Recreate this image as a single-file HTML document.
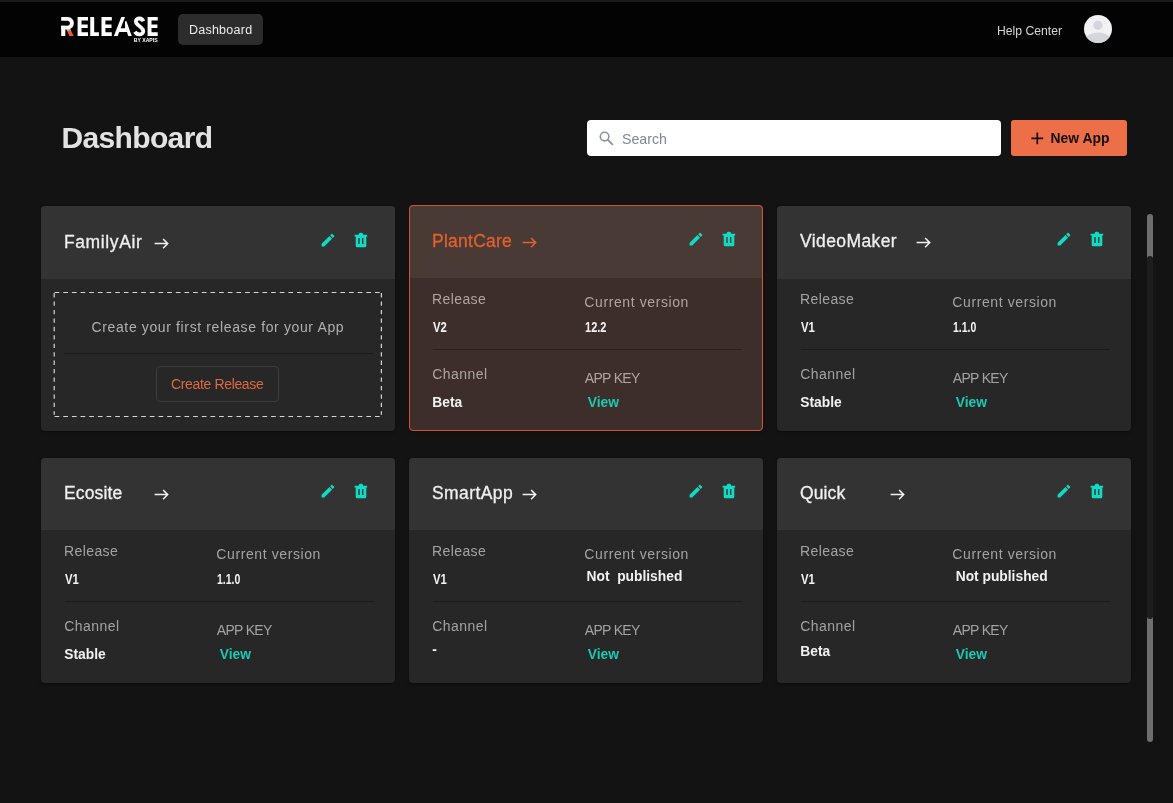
<!DOCTYPE html>
<html>
<head>
<meta charset="utf-8">
<title>Release Dashboard</title>
<style>
*{box-sizing:border-box;margin:0;padding:0}
html,body{width:1173px;height:803px;overflow:hidden;background:#131313;font-family:"Liberation Sans",sans-serif;}
body{position:relative}
#root{position:absolute;left:0;top:0;width:1173px;height:803px;will-change:transform}
.abs{position:absolute}
.t{position:absolute;white-space:nowrap;line-height:20px}
.topline{left:0;top:0;width:1173px;height:2px;background:#1b1b1b}
.nav{left:0;top:2px;width:1173px;height:55px;background:#030303}
.navbtn{left:178px;top:14px;width:85px;height:31px;background:#2c2c2c;border-radius:5px;color:#ececec;font-size:12.5px;line-height:31px;text-align:center;letter-spacing:0.25px;padding-top:1px;padding-left:0.3px}
.help{left:997px;top:22.5px;color:#d6d6d6;font-size:12.2px;line-height:16px;white-space:nowrap}
.avatar{left:1083.7px;top:15.3px;width:28px;height:28px}
.logo{left:60px;top:14px}
h1{left:61.5px;top:118px;font-size:30px;line-height:40px;color:#e2e2e2;font-weight:bold;white-space:nowrap;letter-spacing:-0.65px}
.search{left:587px;top:120px;width:414px;height:36px;background:#fff;border-radius:4px}
.search span{position:absolute;left:35px;top:9.5px;font-size:14.2px;line-height:18px;color:#7c8798}
.search svg{position:absolute;left:12px;top:11px}
.newapp{left:1011px;top:120px;width:116px;height:36px;background:#ec6f48;border-radius:3px;color:#150b06;font-size:13.9px;font-weight:bold}
.newapp span{position:absolute;left:39.5px;top:8.5px;line-height:18px;white-space:nowrap}
.newapp svg{position:absolute;left:19.8px;top:11.8px}
.card{width:354px;height:225px;background:#272727;border-radius:4px;box-shadow:0 1px 3px rgba(0,0,0,.45)}
.card .hd{position:absolute;left:0;top:0;width:100%;height:73px;background:#333333;border-radius:4px 4px 0 0}
.card svg{position:absolute}
.ttl{font-size:17.5px;color:#f0f0f0;letter-spacing:0.4px;-webkit-text-stroke:0.3px #f0f0f0}
.lbl{font-size:14px;color:#a3a3a3}
.val{font-size:13.8px;color:#f2f2f2;font-weight:bold}
.view{font-size:13.8px;color:#1cc9b3;font-weight:bold}
.sep{position:absolute;left:23px;width:309px;height:1px;background:#1b1b1b}
.sel{background:#3d2e2b;height:226px}
.sel .hd{background:#4a3a36}
.sel .ttl{color:#e2602f;-webkit-text-stroke-color:#e2602f}
.sel .sep{background:#2c201e}
.sel .lbl{color:#ada5a2}
.selb{position:absolute;left:0;top:0;width:354px;height:226px;border:1px solid #d4552a;border-radius:4px}
.dmsg{font-size:14px;color:#b0b0b0}
.cbtn{position:absolute;border:1px solid #3d3d3d;border-radius:4px}
.cbt{font-size:14px;color:#dc6a42;letter-spacing:-0.35px}
.sb{left:1147px;width:6px;border-radius:3px}
</style>
</head>
<body>
<div id="root">
<div class="abs topline"></div>
<div class="abs nav"></div>
<svg class="abs logo" width="100" height="30" viewBox="60 14 100 30">
<g fill="#fff">
<path d="M61.2 18.8H67.7A4.43 4.43 0 0 1 67.7 27.65H61.2" fill="none" stroke="#fff" stroke-width="3.8"/>
<path d="M61.2 25.75h4.1v10.15h-4.1z"/>
<path d="M66.4 29.3h4.1l0.6 1.5h-4.1z" fill="#e9e9e9"/>
<path d="M67 30.7h4.1l2.6 5.2h-4.4z" fill="#f05a22"/>
<path d="M77.6 16.9h10.4v3.6h-6.5v4h6.2v3.5h-6.2v4.3h6.5v3.6h-10.4z"/>
<path d="M90.25 16.9h3.95v15.4h4.7v3.6h-8.65z"/>
<path d="M101.5 16.9h10.3v3.6h-6.4v4h6.1v3.5h-6.1v4.3h6.4v3.6h-10.3z"/>
<path d="M113.9 35.9L121.3 16.9H125L117.7 35.9z"/>
<path d="M125 21.2h1.5l5.2 14.7h-3.5l-1.2-3.8h-9l1.5-3.9h5.6z"/>
<path d="M143.4 21.2C142.6 19.4 141.3 18.5 139.4 18.5C137.2 18.5 135.8 19.8 135.8 21.5C135.8 23 136.6 23.8 138 24.9L141.2 27.6C142.6 28.8 143.3 29.7 143.3 31.2C143.3 33.1 141.6 34.3 139.3 34.3C137.3 34.3 135.9 33.4 134.9 31.7" fill="none" stroke="#fff" stroke-width="3.8"/>
<path d="M147.6 16.9h10.1v3.6h-6.2v4h5.9v3.5h-5.9v4.3h6.2v3.6h-10.1z"/>
</g>
<text x="133.7" y="41.9" font-family="Liberation Sans, sans-serif" font-weight="bold" font-size="5.4" fill="#fff" textLength="24" lengthAdjust="spacingAndGlyphs">BY XAPIS</text>
</svg>
<div class="abs navbtn">Dashboard</div>
<div class="abs help">Help Center</div>
<svg class="abs avatar" width="28" height="28" viewBox="0 0 28 28"><defs><clipPath id="av"><circle cx="14" cy="14" r="14"/></clipPath></defs><circle cx="14" cy="14" r="14" fill="#f2f2f5"/><g clip-path="url(#av)" fill="#d5d6dd"><circle cx="14" cy="10.3" r="4.6"/><ellipse cx="14" cy="28" rx="14.5" ry="10.5"/></g></svg>
<h1 class="abs">Dashboard</h1>
<div class="abs search"><svg width="15" height="15" viewBox="0 0 15 15"><circle cx="5.6" cy="5.6" r="4.3" fill="none" stroke="#8a94a6" stroke-width="1.6"/><path d="M8.8 8.8L13.4 13.4" stroke="#8a94a6" stroke-width="1.8" stroke-linecap="round"/></svg><span>Search</span></div>
<div class="abs newapp"><svg width="13" height="13" viewBox="0 0 13 13"><path d="M6.3 0.4V12.2M0.4 6.3H12.2" stroke="#150b06" stroke-width="1.7"/></svg><span>New App</span></div>
<div class="abs card" style="left:41px;top:206px"><div class="hd" style="height:73px"></div><div class="t ttl" style="left:23.00px;top:26.34px;letter-spacing:0.6px">FamilyAir</div><svg style="left:113.3px;top:31px" width="16" height="13" viewBox="0 0 16 13"><path d="M0.6 6.6H13.6M9.1 2L13.7 6.6L9.1 11.2" fill="none" stroke="#f0f0f0" stroke-width="1.5"/></svg><svg style="left:280px;top:27px" width="15" height="15" viewBox="0 0 15 15"><g fill="#10dcc4" transform="translate(0.6 0.8) scale(0.7056) translate(-3 -3)"><path d="M3 17.25V21h3.75L17.81 9.94l-3.75-3.75L3 17.25zM20.71 7.04c.39-.39.39-1.02 0-1.41l-2.34-2.34c-.39-.39-1.02-.39-1.41 0l-1.83 1.83 3.75 3.75 1.83-1.83z"/></g></svg><svg style="left:313.1px;top:25.7px" width="14" height="16" viewBox="0 0 14 16"><path fill="#10dcc4" fill-rule="evenodd" d="M4.6 2.7V2.4a1.7 1.7 0 0 1 1.7-1.7h1.2a1.7 1.7 0 0 1 1.7 1.7v0.3H13.2V4.6H12.3V13.8a1.5 1.5 0 0 1-1.5 1.5H3.2a1.5 1.5 0 0 1-1.5-1.5V4.6H0.6V2.7zM4.3 6V12.1H5.7V6z M8 6V12.1H9.4V6z"/></svg><svg style="left:12px;top:85px" width="331" height="128"><g fill="none" stroke="#d6d6d6" stroke-width="1.2"><path d="M1.6 1.5H328.4M1.6 125.5H328.4" stroke-dasharray="4.66 4"/><path d="M1.2 2.1V123.8M328.4 2.1V123.8" stroke-dasharray="4.3 4.14"/></g></svg><div class="t dmsg" style="left:50.50px;top:111.45px;letter-spacing:0.63px">Create your first release for your App</div><div class="sep" style="top:147px"></div><div class="cbtn" style="left:115px;top:160px;width:123px;height:36px"></div><div class="t cbt" style="left:130.00px;top:168.15px;">Create Release</div></div>
<div class="abs card sel" style="left:409px;top:205px"><div class="hd" style="height:73px"></div><div class="t ttl" style="left:23.00px;top:26.34px;letter-spacing:0.25px">PlantCare</div><svg style="left:113.3px;top:31px" width="16" height="13" viewBox="0 0 16 13"><path d="M0.6 6.6H13.6M9.1 2L13.7 6.6L9.1 11.2" fill="none" stroke="#e2602f" stroke-width="1.5"/></svg><svg style="left:280px;top:27px" width="15" height="15" viewBox="0 0 15 15"><g fill="#10dcc4" transform="translate(0.6 0.8) scale(0.7056) translate(-3 -3)"><path d="M3 17.25V21h3.75L17.81 9.94l-3.75-3.75L3 17.25zM20.71 7.04c.39-.39.39-1.02 0-1.41l-2.34-2.34c-.39-.39-1.02-.39-1.41 0l-1.83 1.83 3.75 3.75 1.83-1.83z"/></g></svg><svg style="left:313.1px;top:25.7px" width="14" height="16" viewBox="0 0 14 16"><path fill="#10dcc4" fill-rule="evenodd" d="M4.6 2.7V2.4a1.7 1.7 0 0 1 1.7-1.7h1.2a1.7 1.7 0 0 1 1.7 1.7v0.3H13.2V4.6H12.3V13.8a1.5 1.5 0 0 1-1.5 1.5H3.2a1.5 1.5 0 0 1-1.5-1.5V4.6H0.6V2.7zM4.3 6V12.1H5.7V6z M8 6V12.1H9.4V6z"/></svg><div class="t lbl" style="left:23.00px;top:83.95px;letter-spacing:0.4px">Release</div><div class="t lbl" style="left:175.30px;top:87.45px;letter-spacing:0.6px">Current version</div><div class="t val" style="left:24.00px;top:113.12px;transform:scaleX(0.82);transform-origin:0 50%">V2</div><div class="t val" style="left:176.10px;top:113.12px;transform:scaleX(0.8);transform-origin:0 50%">12.2</div><div class="sep" style="left:24px;top:144px"></div><div class="t lbl" style="left:23.20px;top:158.75px;letter-spacing:0.48px">Channel</div><div class="t lbl" style="left:175.80px;top:162.55px;letter-spacing:-0.7px">APP KEY</div><div class="t val" style="left:23.30px;top:188.12px;">Beta</div><div class="t view" style="left:178.80px;top:188.12px;">View</div><div class="selb"></div></div>
<div class="abs card" style="left:777px;top:206px"><div class="hd" style="height:73px"></div><div class="t ttl" style="left:23.00px;top:25.34px;letter-spacing:0.4px">VideoMaker</div><svg style="left:138.7px;top:30px" width="16" height="13" viewBox="0 0 16 13"><path d="M0.6 6.6H13.6M9.1 2L13.7 6.6L9.1 11.2" fill="none" stroke="#f0f0f0" stroke-width="1.5"/></svg><svg style="left:280px;top:26px" width="15" height="15" viewBox="0 0 15 15"><g fill="#10dcc4" transform="translate(0.6 0.8) scale(0.7056) translate(-3 -3)"><path d="M3 17.25V21h3.75L17.81 9.94l-3.75-3.75L3 17.25zM20.71 7.04c.39-.39.39-1.02 0-1.41l-2.34-2.34c-.39-.39-1.02-.39-1.41 0l-1.83 1.83 3.75 3.75 1.83-1.83z"/></g></svg><svg style="left:313.1px;top:24.7px" width="14" height="16" viewBox="0 0 14 16"><path fill="#10dcc4" fill-rule="evenodd" d="M4.6 2.7V2.4a1.7 1.7 0 0 1 1.7-1.7h1.2a1.7 1.7 0 0 1 1.7 1.7v0.3H13.2V4.6H12.3V13.8a1.5 1.5 0 0 1-1.5 1.5H3.2a1.5 1.5 0 0 1-1.5-1.5V4.6H0.6V2.7zM4.3 6V12.1H5.7V6z M8 6V12.1H9.4V6z"/></svg><div class="t lbl" style="left:23.00px;top:82.95px;letter-spacing:0.4px">Release</div><div class="t lbl" style="left:175.30px;top:86.45px;letter-spacing:0.6px">Current version</div><div class="t val" style="left:24.00px;top:112.12px;transform:scaleX(0.82);transform-origin:0 50%">V1</div><div class="t val" style="left:176.10px;top:112.12px;transform:scaleX(0.76);transform-origin:0 50%">1.1.0</div><div class="sep" style="left:24px;top:143px"></div><div class="t lbl" style="left:23.20px;top:157.75px;letter-spacing:0.48px">Channel</div><div class="t lbl" style="left:175.80px;top:161.55px;letter-spacing:-0.7px">APP KEY</div><div class="t val" style="left:23.30px;top:187.12px;">Stable</div><div class="t view" style="left:178.80px;top:187.12px;">View</div></div>
<div class="abs card" style="left:41px;top:458px"><div class="hd" style="height:72px"></div><div class="t ttl" style="left:23.00px;top:25.34px;letter-spacing:0.15px">Ecosite</div><svg style="left:113.3px;top:30px" width="16" height="13" viewBox="0 0 16 13"><path d="M0.6 6.6H13.6M9.1 2L13.7 6.6L9.1 11.2" fill="none" stroke="#f0f0f0" stroke-width="1.5"/></svg><svg style="left:280px;top:26px" width="15" height="15" viewBox="0 0 15 15"><g fill="#10dcc4" transform="translate(0.6 0.8) scale(0.7056) translate(-3 -3)"><path d="M3 17.25V21h3.75L17.81 9.94l-3.75-3.75L3 17.25zM20.71 7.04c.39-.39.39-1.02 0-1.41l-2.34-2.34c-.39-.39-1.02-.39-1.41 0l-1.83 1.83 3.75 3.75 1.83-1.83z"/></g></svg><svg style="left:313.1px;top:24.7px" width="14" height="16" viewBox="0 0 14 16"><path fill="#10dcc4" fill-rule="evenodd" d="M4.6 2.7V2.4a1.7 1.7 0 0 1 1.7-1.7h1.2a1.7 1.7 0 0 1 1.7 1.7v0.3H13.2V4.6H12.3V13.8a1.5 1.5 0 0 1-1.5 1.5H3.2a1.5 1.5 0 0 1-1.5-1.5V4.6H0.6V2.7zM4.3 6V12.1H5.7V6z M8 6V12.1H9.4V6z"/></svg><div class="t lbl" style="left:23.00px;top:82.95px;letter-spacing:0.4px">Release</div><div class="t lbl" style="left:175.30px;top:86.45px;letter-spacing:0.6px">Current version</div><div class="t val" style="left:24.00px;top:112.12px;transform:scaleX(0.82);transform-origin:0 50%">V1</div><div class="t val" style="left:176.10px;top:112.12px;transform:scaleX(0.76);transform-origin:0 50%">1.1.0</div><div class="sep" style="left:24px;top:143px"></div><div class="t lbl" style="left:23.20px;top:157.75px;letter-spacing:0.48px">Channel</div><div class="t lbl" style="left:175.80px;top:161.55px;letter-spacing:-0.7px">APP KEY</div><div class="t val" style="left:23.30px;top:187.12px;">Stable</div><div class="t view" style="left:178.80px;top:187.12px;">View</div></div>
<div class="abs card" style="left:409px;top:458px"><div class="hd" style="height:72px"></div><div class="t ttl" style="left:23.00px;top:25.34px;letter-spacing:0.4px">SmartApp</div><svg style="left:113.3px;top:30px" width="16" height="13" viewBox="0 0 16 13"><path d="M0.6 6.6H13.6M9.1 2L13.7 6.6L9.1 11.2" fill="none" stroke="#f0f0f0" stroke-width="1.5"/></svg><svg style="left:280px;top:26px" width="15" height="15" viewBox="0 0 15 15"><g fill="#10dcc4" transform="translate(0.6 0.8) scale(0.7056) translate(-3 -3)"><path d="M3 17.25V21h3.75L17.81 9.94l-3.75-3.75L3 17.25zM20.71 7.04c.39-.39.39-1.02 0-1.41l-2.34-2.34c-.39-.39-1.02-.39-1.41 0l-1.83 1.83 3.75 3.75 1.83-1.83z"/></g></svg><svg style="left:313.1px;top:24.7px" width="14" height="16" viewBox="0 0 14 16"><path fill="#10dcc4" fill-rule="evenodd" d="M4.6 2.7V2.4a1.7 1.7 0 0 1 1.7-1.7h1.2a1.7 1.7 0 0 1 1.7 1.7v0.3H13.2V4.6H12.3V13.8a1.5 1.5 0 0 1-1.5 1.5H3.2a1.5 1.5 0 0 1-1.5-1.5V4.6H0.6V2.7zM4.3 6V12.1H5.7V6z M8 6V12.1H9.4V6z"/></svg><div class="t lbl" style="left:23.00px;top:82.95px;letter-spacing:0.4px">Release</div><div class="t lbl" style="left:175.30px;top:86.45px;letter-spacing:0.6px">Current version</div><div class="t val" style="left:24.00px;top:112.12px;transform:scaleX(0.82);transform-origin:0 50%">V1</div><div class="t val" style="left:177.50px;top:108.72px;">Not&nbsp; published</div><div class="sep" style="left:24px;top:143px"></div><div class="t lbl" style="left:23.20px;top:157.75px;letter-spacing:0.48px">Channel</div><div class="t lbl" style="left:175.80px;top:161.55px;letter-spacing:-0.7px">APP KEY</div><div class="t val" style="left:23.30px;top:181.82px;">-</div><div class="t view" style="left:178.80px;top:187.12px;">View</div></div>
<div class="abs card" style="left:777px;top:458px"><div class="hd" style="height:72px"></div><div class="t ttl" style="left:23.00px;top:25.34px;letter-spacing:0.1px">Quick</div><svg style="left:113.3px;top:30px" width="16" height="13" viewBox="0 0 16 13"><path d="M0.6 6.6H13.6M9.1 2L13.7 6.6L9.1 11.2" fill="none" stroke="#f0f0f0" stroke-width="1.5"/></svg><svg style="left:280px;top:26px" width="15" height="15" viewBox="0 0 15 15"><g fill="#10dcc4" transform="translate(0.6 0.8) scale(0.7056) translate(-3 -3)"><path d="M3 17.25V21h3.75L17.81 9.94l-3.75-3.75L3 17.25zM20.71 7.04c.39-.39.39-1.02 0-1.41l-2.34-2.34c-.39-.39-1.02-.39-1.41 0l-1.83 1.83 3.75 3.75 1.83-1.83z"/></g></svg><svg style="left:313.1px;top:24.7px" width="14" height="16" viewBox="0 0 14 16"><path fill="#10dcc4" fill-rule="evenodd" d="M4.6 2.7V2.4a1.7 1.7 0 0 1 1.7-1.7h1.2a1.7 1.7 0 0 1 1.7 1.7v0.3H13.2V4.6H12.3V13.8a1.5 1.5 0 0 1-1.5 1.5H3.2a1.5 1.5 0 0 1-1.5-1.5V4.6H0.6V2.7zM4.3 6V12.1H5.7V6z M8 6V12.1H9.4V6z"/></svg><div class="t lbl" style="left:23.00px;top:82.95px;letter-spacing:0.4px">Release</div><div class="t lbl" style="left:175.30px;top:86.45px;letter-spacing:0.6px">Current version</div><div class="t val" style="left:24.00px;top:112.12px;transform:scaleX(0.82);transform-origin:0 50%">V1</div><div class="t val" style="left:178.70px;top:108.72px;">Not published</div><div class="sep" style="left:24px;top:143px"></div><div class="t lbl" style="left:23.20px;top:157.75px;letter-spacing:0.48px">Channel</div><div class="t lbl" style="left:175.80px;top:161.55px;letter-spacing:-0.7px">APP KEY</div><div class="t val" style="left:23.30px;top:183.72px;">Beta</div><div class="t view" style="left:178.80px;top:187.12px;">View</div></div>
<div class="abs sb" style="top:214px;height:44px;background:#6e6e6e;border-radius:3px 3px 0 0"></div>
<div class="abs sb" style="top:617px;height:125px;background:#6e6e6e;border-radius:0 0 3px 3px"></div>
<div class="abs sb" style="top:256px;height:363px;background:#1d1d1d"></div>
</div>
</body>
</html>
